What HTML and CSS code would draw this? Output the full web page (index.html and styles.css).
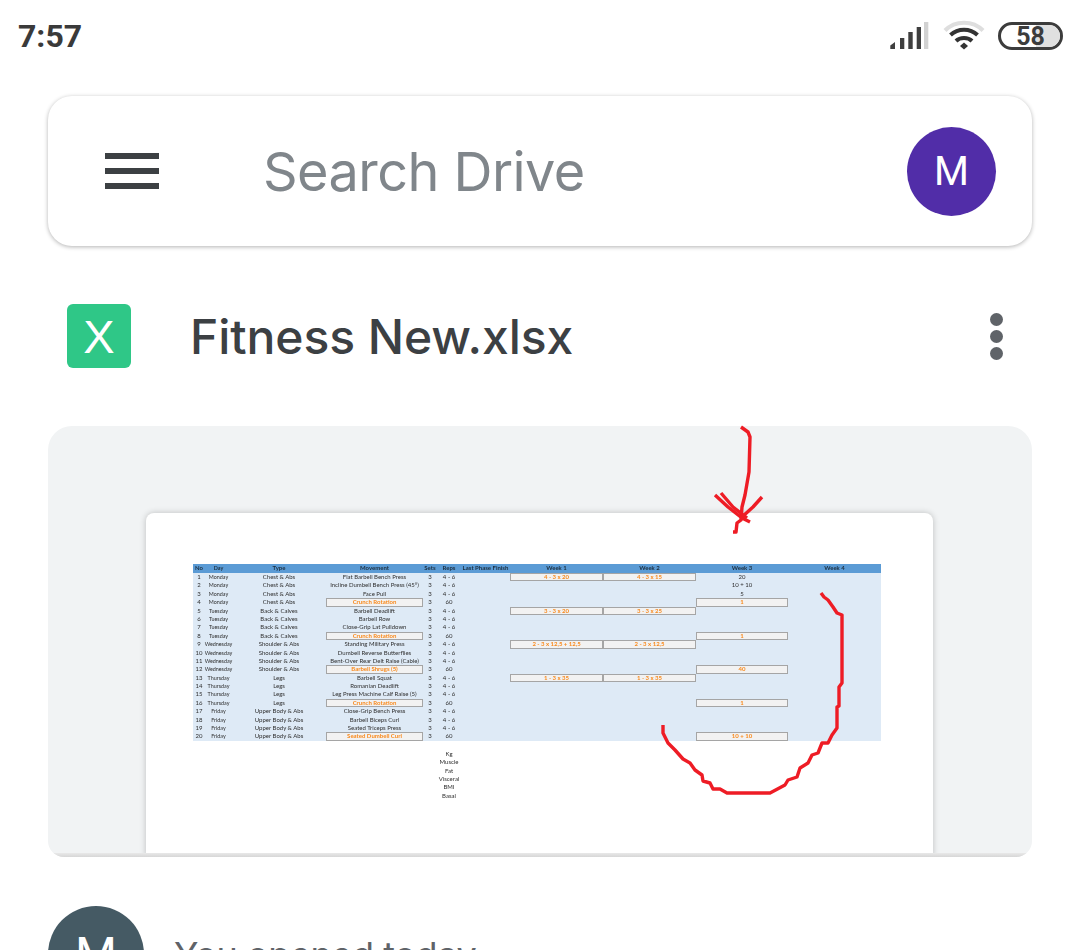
FILE: index.html
```html
<!DOCTYPE html>
<html lang="en">
<head>
<meta charset="utf-8">
<title>Fitness New.xlsx</title>
<link rel="stylesheet" href="styles.css">
</head>
<body>
<div class="page">
  <header class="status">
    <span class="time">7:57</span>
    <div class="status-icons">
      <svg class="signal" width="40" height="30" viewBox="0 0 40 30">
        <path d="M.3 28v-3.500l4.700-3.500V28z M10 28V17h4.300v11z M18.300 28V11h4.400v17z M26.700 28V6H31v22z" fill="#3f3f3f"/>
        <rect x="34" y="1" width="4.300" height="27" fill="#d2d2d2"/>
      </svg>
      <svg class="wifi" width="42" height="32" viewBox="0 0 42 32">
        <path d="M2 10.500C12-0 30-0 40 10.500" fill="none" stroke="#dedede" stroke-width="4"/>
        <path d="M7.500 15C15 8 27 8 34.500 15" fill="none" stroke="#333" stroke-width="4"/>
        <path d="M13 21C17 17 25 17 29 21" fill="none" stroke="#333" stroke-width="4"/>
        <path d="M17 26l4-3.500 4 3.500-4 3.500z" fill="#333"/>
      </svg>
      <div class="battery"><span class="battery-level"></span><span class="battery-num">58</span></div>
    </div>
  </header>

  <section class="search">
    <div class="menu"><i></i><i></i><i></i></div>
    <span class="search-text">Search Drive</span>
    <span class="avatar">M</span>
  </section>

  <section class="file">
    <span class="file-icon">X</span>
    <span class="file-name">Fitness New.xlsx</span>
    <div class="dots"><i></i><i></i><i></i></div>
  </section>

  <section class="preview">
    <div class="paper">
      <div class="sheet">
        <div class="row head"><span>No</span><span>Day</span><span>Type</span><span>Movement</span><span>Sets</span><span>Reps</span><span>Last Phase Finish</span><span>Week 1</span><span>Week 2</span><span>Week 3</span><span>Week 4</span></div>
        <div class="row"><span>1</span><span>Monday</span><span>Chest &amp; Abs</span><span>Flat Barbell Bench Press</span><span>3</span><span>4 - 6</span><span></span><span class="box">4 - 3 x 20</span><span class="box">4 - 3 x 15</span><span>20</span></div>
        <div class="row"><span>2</span><span>Monday</span><span>Chest &amp; Abs</span><span>Incline Dumbell Bench Press (45°)</span><span>3</span><span>4 - 6</span><span></span><span></span><span></span><span>10 + 10</span></div>
        <div class="row"><span>3</span><span>Monday</span><span>Chest &amp; Abs</span><span>Face Pull</span><span>3</span><span>4 - 6</span><span></span><span></span><span></span><span>5</span></div>
        <div class="row"><span>4</span><span>Monday</span><span>Chest &amp; Abs</span><span class="box">Crunch Rotation</span><span>3</span><span>60</span><span></span><span></span><span></span><span class="box">1</span></div>
        <div class="row"><span>5</span><span>Tuesday</span><span>Back &amp; Calves</span><span>Barbell Deadlift</span><span>3</span><span>4 - 6</span><span></span><span class="box">3 - 3 x 20</span><span class="box">3 - 3 x 25</span></div>
        <div class="row"><span>6</span><span>Tuesday</span><span>Back &amp; Calves</span><span>Barbell Row</span><span>3</span><span>4 - 6</span></div>
        <div class="row"><span>7</span><span>Tuesday</span><span>Back &amp; Calves</span><span>Close-Grip Lat Pulldown</span><span>3</span><span>4 - 6</span></div>
        <div class="row"><span>8</span><span>Tuesday</span><span>Back &amp; Calves</span><span class="box">Crunch Rotation</span><span>3</span><span>60</span><span></span><span></span><span></span><span class="box">1</span></div>
        <div class="row"><span>9</span><span>Wednesday</span><span>Shoulder &amp; Abs</span><span>Standing Military Press</span><span>3</span><span>4 - 6</span><span></span><span class="box">2 - 3 x 12,5 + 12,5</span><span class="box">2 - 3 x 12,5</span></div>
        <div class="row"><span>10</span><span>Wednesday</span><span>Shoulder &amp; Abs</span><span>Dumbell Reverse Butterflies</span><span>3</span><span>4 - 6</span></div>
        <div class="row"><span>11</span><span>Wednesday</span><span>Shoulder &amp; Abs</span><span>Bent-Over Rear Delt Raise (Cable)</span><span>3</span><span>4 - 6</span></div>
        <div class="row"><span>12</span><span>Wednesday</span><span>Shoulder &amp; Abs</span><span class="box">Barbell Shrugs (5)</span><span>3</span><span>60</span><span></span><span></span><span></span><span class="box">40</span></div>
        <div class="row"><span>13</span><span>Thursday</span><span>Legs</span><span>Barbell Squat</span><span>3</span><span>4 - 6</span><span></span><span class="box">1 - 3 x 35</span><span class="box">1 - 3 x 35</span></div>
        <div class="row"><span>14</span><span>Thursday</span><span>Legs</span><span>Romanian Deadlift</span><span>3</span><span>4 - 6</span></div>
        <div class="row"><span>15</span><span>Thursday</span><span>Legs</span><span>Leg Press Machine Calf Raise (5)</span><span>3</span><span>4 - 6</span></div>
        <div class="row"><span>16</span><span>Thursday</span><span>Legs</span><span class="box">Crunch Rotation</span><span>3</span><span>60</span><span></span><span></span><span></span><span class="box">1</span></div>
        <div class="row"><span>17</span><span>Friday</span><span>Upper Body &amp; Abs</span><span>Close-Grip Bench Press</span><span>3</span><span>4 - 6</span></div>
        <div class="row"><span>18</span><span>Friday</span><span>Upper Body &amp; Abs</span><span>Barbell Biceps Curl</span><span>3</span><span>4 - 6</span></div>
        <div class="row"><span>19</span><span>Friday</span><span>Upper Body &amp; Abs</span><span>Seated Triceps Press</span><span>3</span><span>4 - 6</span></div>
        <div class="row"><span>20</span><span>Friday</span><span>Upper Body &amp; Abs</span><span class="box">Seated Dumbell Curl</span><span>3</span><span>60</span><span></span><span></span><span></span><span class="box">10 + 10</span></div>
        <div class="notes"><span>Kg</span><span>Muscle</span><span>Fat</span><span>Visceral</span><span>BMI</span><span>Basal</span></div>
      </div>
    </div>
  </section>

  <section class="activity">
    <span class="activity-avatar">M</span>
    <span class="activity-text">You opened today</span>
  </section>

  <svg class="scribble" width="1080" height="950" viewBox="0 0 1080 950">
    <path d="M741 427L748 432L750 437L749 472L745 495L742 507L741 520L737 523L736 532L733 532"/>
    <path d="M715 495L728 507L742 518L750 522"/>
    <path d="M721 493L733 507L747 518"/>
    <path d="M762 497L753 507L742 517"/>
    <path d="M821 593L824 597L828 600L833 607L837 613L842 615L842 683L839 687L839 706L837 707L837 728L832 735L828 743L822 743L818 753L812 755L808 763L800 768L797 777L788 780L785 785L770 793L727 793L720 789L713 789L710 783L703 781L702 775L695 770L690 763L683 759L675 750L668 743L663 733L663 725"/>
  </svg>
</div>
</body>
</html>
```
FILE: styles.css
```css
* { box-sizing: border-box; }
html, body { margin: 0; padding: 0; background: #fff; }
.page {
  width: 1080px;
  height: 950px;
  overflow: hidden;
  position: relative;
  font-family: Inter, Roboto, "Liberation Sans", sans-serif;
}

/* status bar */
.status {
  height: 96px;
  padding: 0 17px 24px 18px;
  display: flex;
  align-items: center;
  justify-content: space-between;
}
.time { font-family: Roboto, sans-serif; font-size: 32px; font-weight: 700; color: #3a3a3a; }
.status-icons { display: flex; align-items: center; }
.signal { margin-right: 13px; }
.wifi { margin-right: 13px; }
.battery {
  width: 65px;
  height: 28px;
  border: 3px solid #3c3c3c;
  border-radius: 14px;
  position: relative;
  display: flex;
  align-items: center;
  justify-content: center;
  padding: 2px 0 0;
}
.battery-level { position: absolute; top: 0; bottom: 0; right: 0; width: 24px; background: #e0e0e0; border-radius: 0 11px 11px 0; }
.battery-num { position: relative; font-family: Roboto, sans-serif; font-size: 25px; font-weight: 700; color: #3c3c3c; line-height: 22px; }

/* search */
.search {
  margin: 0 48px;
  height: 150px;
  border-radius: 24px;
  background: #fff;
  box-shadow: 0 1px 4px rgba(0,0,0,.3);
  display: flex;
  align-items: center;
  padding: 0 36px 0 57px;
}
.menu { width: 54px; display: flex; flex-direction: column; gap: 9px; }
.menu i { display: block; height: 6px; background: #3c4043; }
.search-text { margin-left: 104px; flex: 1; font-size: 54px; color: #80868b; letter-spacing: -.55px; }
.avatar {
  width: 89px; height: 89px; border-radius: 50%;
  background: #512da8; color: #fff;
  display: flex; align-items: center; justify-content: center;
  font-family: Roboto, sans-serif;
  font-size: 40px;
}

/* file row */
.file {
  height: 180px;
  margin: 0 48px;
  display: flex;
  align-items: center;
  padding: 0 30px 0 19px;
}
.file-icon {
  width: 64px; height: 64px; border-radius: 6px;
  background: #2fc787; color: #fff;
  display: flex; align-items: center; justify-content: center;
  font-size: 47px; font-family: "Liberation Sans", sans-serif;
}
.file-name { margin-left: 59px; flex: 1; font-size: 48px; font-weight: 500; color: #3c4043; letter-spacing: -.07px; }
.dots { width: 12px; display: flex; flex-direction: column; gap: 4px; }
.dots i { display: block; width: 13px; height: 13px; border-radius: 50%; background: #5f6368; }

/* preview card */
.preview {
  margin: 0 48px;
  height: 431px;
  background: #f1f3f4;
  border-radius: 24px 24px 16px 16px;
  padding: 87px 99px 0 98px;
  position: relative;
  overflow: hidden;
}
.preview::after {
  content: "";
  position: absolute;
  left: 0; right: 0; bottom: 0;
  height: 4px;
  background: linear-gradient(#e8e8e8, #d6d6d6);
}
.paper {
  height: 344px;
  background: #fff;
  border-radius: 8px 8px 0 0;
  box-shadow: 0 0 6px rgba(0,0,0,.22);
  padding: 51px 52px 0 47px;
}
.sheet {
  font-family: Lato, "Liberation Sans", sans-serif;
  font-size: 6px;
  color: #2f2f2f;
  filter: blur(.4px);
}
.row {
  display: grid;
  grid-template-columns: 12px 27px 94px 97px 14px 24px 49px 93px 93px 92px 93px;
  grid-auto-rows: 8.4px;
  background: #deeaf6;
  line-height: 8.4px;
  text-align: center;
  white-space: nowrap;
}
.row span { min-width: 0; display: flex; justify-content: center; }
.row span:nth-child(2) { font-size: 5.4px; }
.head { height: 9px; background: #5b9bd5; color: #1c2f40; font-weight: 700; grid-auto-rows: 9px; }
.row .box {
  background: #f2f2f2;
  border: 1px solid #a5a5a5;
  color: #f98a1d;
  font-weight: 700;
  line-height: 6.4px;
}
.notes {
  margin: 9px 0 0 244px;
  width: 24px;
  display: flex;
  flex-direction: column;
  align-items: center;
  line-height: 8.4px;
}

/* activity */
.activity {
  margin: 49px 48px 0;
  display: flex;
  align-items: flex-start;
}
.activity-avatar {
  width: 96px; height: 96px; border-radius: 50%;
  background: #455a64; color: #fff;
  display: flex; align-items: center; justify-content: center;
  font-family: Roboto, sans-serif;
  font-size: 48px; flex: none;
}
.activity-text { margin: 27px 0 0 30px; font-size: 36px; color: #5f6368; letter-spacing: -.4px; }

/* hand-drawn ink over the page */
.scribble { position: absolute; left: 0; top: 0; pointer-events: none; }
.scribble path { fill: none; stroke: #ee1c25; stroke-width: 3.4; stroke-linejoin: round; }
```
